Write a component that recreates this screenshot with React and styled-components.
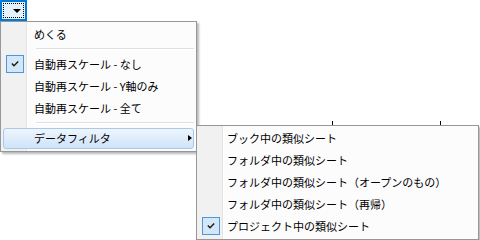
import styled, { createGlobalStyle } from "styled-components";

const GlobalStyle = createGlobalStyle`
    body {
        margin: 0;
        background: #ffffff;
        font-family: "Noto Sans CJK JP", "Noto Sans", sans-serif;
    }
`;

const mainItems = [
    { label: "めくる" },
    { sep: true },
    { label: "自動再スケール - なし", checked: true },
    { label: "自動再スケール - Y軸のみ" },
    { label: "自動再スケール - 全て" },
    { sep: true },
    { label: "データフィルタ", submenu: true, active: true },
];

const subItems = [
    { label: "ブック中の類似シート" },
    { label: "フォルダ中の類似シート" },
    { label: "フォルダ中の類似シート（オープンのもの）" },
    { label: "フォルダ中の類似シート（再帰）" },
    { label: "プロジェクト中の類似シート", checked: true },
];

function CheckMark() {
    return (
        <svg width="8" height="6" viewBox="0 0 8 6">
            <path d="M0.8 2.6 L3 4.8 L7.2 0.6" fill="none" stroke="#1a1a1a" strokeWidth="1.4" />
        </svg>
    );
}

function MenuList({ items, textInset }) {
    return items.map((item, i) =>
        item.sep ? (
            <Separator key={i} />
        ) : (
            <Item key={i} $active={item.active}>
                <Gutter>
                    {item.checked && (
                        <CheckBox>
                            <CheckMark />
                        </CheckBox>
                    )}
                </Gutter>
                <Label $inset={textInset}>{item.label}</Label>
                {item.submenu && <Arrow />}
            </Item>
        )
    );
}

export default function App() {
    return (
        <Stage>
            <GlobalStyle />
            <DropButton>
                <FocusRect>
                    <DownArrow />
                </FocusRect>
            </DropButton>
            <Tick style={{ left: 332 }} />
            <Tick style={{ left: 440 }} />
            <Menu $left={0} $top={21} $width={197}>
                <MenuList items={mainItems} textInset={6} />
            </Menu>
            <Menu $left={196} $top={125} $width={283}>
                <MenuList items={subItems} textInset={3} />
            </Menu>
        </Stage>
    );
}

// Styles

const Stage = styled.div`
    position: relative;
    width: 480px;
    height: 240px;
    overflow: hidden;
    background: #ffffff;
`;

const DropButton = styled.div`
    box-sizing: border-box;
    width: 27px;
    height: 21px;
    border: 2px solid #0078d7;
    background: #e5f1fb;
    padding: 1px;
    display: flex;
`;

const FocusRect = styled.div`
    flex: 1;
    border: 1px dotted #000000;
    display: flex;
    align-items: center;
    justify-content: flex-end;
    padding-right: 2px;
`;

const DownArrow = styled.div`
    width: 0;
    height: 0;
    border-left: 4px solid transparent;
    border-right: 4px solid transparent;
    border-top: 4px solid #000000;
    margin-top: 1px;
`;

const Tick = styled.div`
    position: absolute;
    top: 121px;
    width: 1px;
    height: 4px;
    background: #000000;
`;

const Menu = styled.div`
    position: absolute;
    left: ${(p) => p.$left}px;
    top: ${(p) => p.$top}px;
    width: ${(p) => p.$width}px;
    box-sizing: border-box;
    border: 1px solid #979797;
    background: linear-gradient(to right, #f1f1f1 0 25px, #e2e3e3 25px 26px, #ffffff 26px 27px, #fcfcfc 27px);
    padding: 1px 0 2px;
    display: flex;
    flex-direction: column;
    box-shadow: 2px 2px 2px rgba(0, 0, 0, 0.28);
`;

const Item = styled.div`
    position: relative;
    height: 22px;
    display: flex;
    align-items: center;
    font-size: 11px;
    color: #000000;
    &::before {
        content: "";
        display: ${(p) => (p.$active ? "block" : "none")};
        position: absolute;
        left: 2px;
        right: 2px;
        top: 1px;
        bottom: 0;
        border: 1px solid #a9c9ec;
        border-radius: 3px;
        background: linear-gradient(#eef5fd, #cfe3f9);
    }
`;

const Gutter = styled.div`
    position: relative;
    width: 27px;
    height: 100%;
    flex-shrink: 0;
    display: flex;
    align-items: center;
    padding-left: 5px;
    box-sizing: border-box;
`;

const CheckBox = styled.div`
    box-sizing: border-box;
    width: 18px;
    height: 18px;
    border: 1px solid #4c97dd;
    background: #d4e7f8;
    display: flex;
    align-items: center;
    justify-content: center;
`;

const Label = styled.span`
    position: relative;
    padding-left: ${(p) => p.$inset}px;
    white-space: nowrap;
    line-height: 22px;
`;

const Arrow = styled.div`
    position: absolute;
    right: 4px;
    top: 8px;
    width: 0;
    height: 0;
    border-top: 3.5px solid transparent;
    border-bottom: 3.5px solid transparent;
    border-left: 4px solid #000000;
`;

const Separator = styled.div`
    height: 8px;
    margin-left: 35px;
    margin-right: 2px;
    background: linear-gradient(#fcfcfc 0 3px, #e0e0e0 3px 4px, #ffffff 4px 5px, #fcfcfc 5px);
`;
